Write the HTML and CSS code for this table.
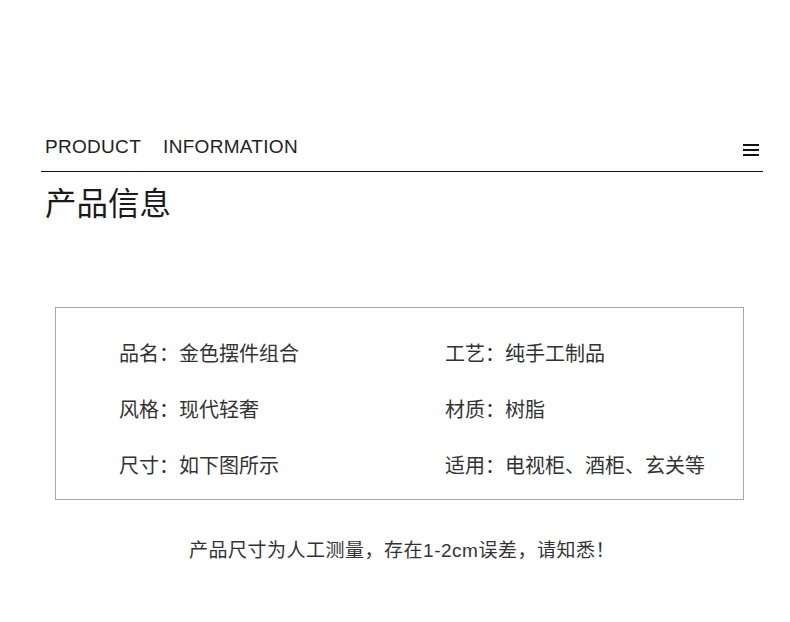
FILE: index.html
```html
<!DOCTYPE html>
<html lang="zh-CN">
<head>
    <meta charset="UTF-8">
    <meta name="viewport" content="width=device-width, initial-scale=1.0">
    <title>产品信息</title>
    <link rel="stylesheet" href="styles.css">
</head>
<body>
    <div class="page">
        <header class="info-header">
            <div class="info-title-en">
                <span>PRODUCT</span>
                <span>INFORMATION</span>
            </div>
            <div class="menu-icon">
                <span></span>
                <span></span>
                <span></span>
            </div>
        </header>

        <h1 class="info-title">产品信息</h1>

        <section class="spec-box">
            <div class="spec-item">品名：金色摆件组合</div>
            <div class="spec-item">工艺：纯手工制品</div>
            <div class="spec-item">风格：现代轻奢</div>
            <div class="spec-item">材质：树脂</div>
            <div class="spec-item">尺寸：如下图所示</div>
            <div class="spec-item">适用：电视柜、酒柜、玄关等</div>
        </section>

        <p class="spec-note">产品尺寸为人工测量，存在1-2cm误差，请知悉！</p>
    </div>
</body>
</html>
```

FILE: styles.css
```css
* {
    margin: 0;
    padding: 0;
    box-sizing: border-box;
}

body {
    font-family: "Noto Sans CJK SC", sans-serif;
    background-color: white;
    color: #333;
    width: 790px;
    height: 622px;
    overflow: hidden;
}

.page {
    padding-top: 135px;
}

/* Header */
.info-header {
    display: flex;
    justify-content: space-between;
    align-items: center;
    margin: 0 27px 0 41px;
    padding: 0 4px 12px 4px;
    border-bottom: 1px solid #111;
}

.info-title-en {
    display: flex;
    gap: 22px;
    font-family: "Liberation Sans", Arial, sans-serif;
    font-size: 19px;
    line-height: 24px;
    letter-spacing: 0.3px;
    color: #222;
}

.menu-icon {
    display: flex;
    flex-direction: column;
    gap: 3px;
    width: 16px;
    margin-top: 6px;
}

.menu-icon span {
    display: block;
    height: 2px;
    background-color: #111;
}

.info-title {
    margin: 9px 0 0 45px;
    font-size: 31.5px;
    font-weight: 400;
    line-height: 40px;
    color: #1a1a1a;
}

/* Spec box */
.spec-box {
    display: grid;
    grid-template-columns: 326px 1fr;
    margin: 86px 46px 0 55px;
    padding: 17px 0 6px 63px;
    border: 1px solid #a8a8a8;
}

.spec-item {
    font-size: 20px;
    line-height: 56px;
    color: #333;
}

.spec-note {
    margin-top: 37px;
    padding-left: 14px;
    text-align: center;
    font-family: "Liberation Sans", "Noto Sans CJK SC", sans-serif;
    font-size: 19px;
    line-height: 28px;
    letter-spacing: 0.5px;
    color: #333;
}
```
